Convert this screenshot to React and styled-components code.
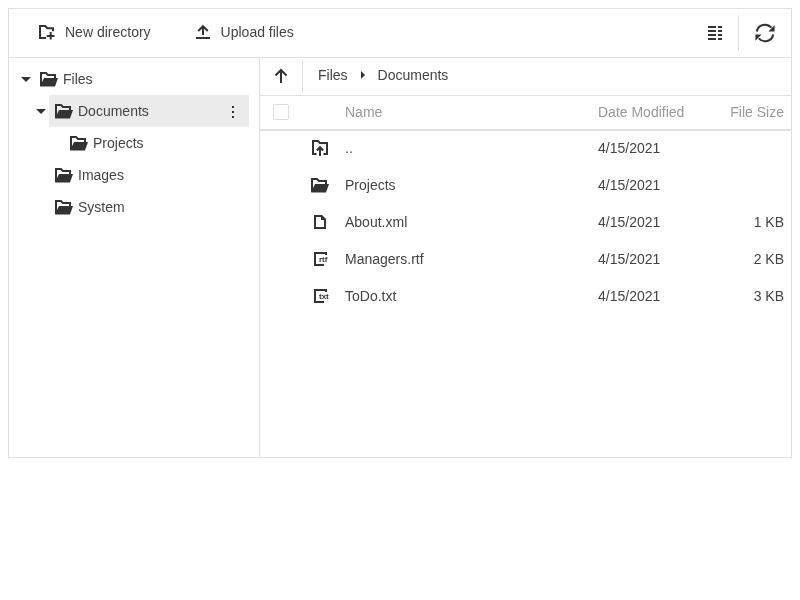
import React from 'react';
import styled, { createGlobalStyle } from 'styled-components';

const ink = '#333';

const GlobalStyle = createGlobalStyle`
  html, body { margin: 0; background: #fff; }
  body { padding: 8px; font-family: "Liberation Sans", Arial, sans-serif; font-size: 14px; color: #444; }
`;

const FolderOpen = () => (
  <svg width="18" height="16" viewBox="0 0 18 16" fill="none">
    <path d="M1 15V2h5l2 2h7v3" stroke={ink} strokeWidth="2" />
    <path d="M4 7h14l-3 8.5H0z" fill={ink} />
  </svg>
);

const NewDirIcon = () => (
  <svg width="16" height="16" viewBox="0 0 16 16" fill="none">
    <path d="M7 14H1V2h5.3l2 2.2H14v3" stroke={ink} strokeWidth="2" />
    <path d="M11.7 8v7.5M7.7 12H15.5" stroke={ink} strokeWidth="2" />
  </svg>
);

const UploadIcon = () => (
  <svg width="14" height="16" viewBox="0 0 14 16" fill="none">
    <path d="M7 11V2.5M2.2 7L7 2.2 11.8 7" stroke={ink} strokeWidth="2" />
    <path d="M0 14h14" stroke={ink} strokeWidth="2" />
  </svg>
);

const ListIcon = () => (
  <svg width="14" height="14" viewBox="0 0 14 14" fill={ink}>
    <path d="M0 0h8v2H0zM0 4h8v2H0zM0 8h8v2H0zM0 12h8v2H0zM10 0h4v2h-4zM10 4h4v2h-4zM10 8h4v2h-4zM10 12h4v2h-4z" />
  </svg>
);

const RefreshIcon = () => (
  <svg width="20" height="20" viewBox="0 0 20 20" fill="none">
    <path d="M1.8 8.5A8.3 8.3 0 0 1 16.2 4.6" stroke={ink} strokeWidth="2.1" />
    <path d="M18.2 11.5A8.3 8.3 0 0 1 3.8 15.4" stroke={ink} strokeWidth="2.1" />
    <path d="M19.6 2.2v6.2h-6.2zM0.4 17.8v-6.2h6.2z" fill={ink} />
  </svg>
);

const UpArrowIcon = () => (
  <svg width="14" height="15" viewBox="0 0 14 15" fill="none">
    <path d="M7 15V2M1.5 7.5L7 2l5.5 5.5" stroke={ink} strokeWidth="2" />
  </svg>
);

const ParentDirIcon = () => (
  <svg width="16" height="16" viewBox="0 0 16 16" fill="none">
    <path d="M4.5 14H1V1h5l1.8 2H15v11h-3.5" stroke={ink} strokeWidth="2" />
    <path d="M8 16V7.5M4.8 10.5L8 7.2l3.2 3.3" stroke={ink} strokeWidth="2" />
  </svg>
);

const FileIcon = () => (
  <svg width="12" height="14" viewBox="0 0 12 14" fill="none">
    <path d="M1 1h6l4 4v8H1z" stroke={ink} strokeWidth="2" />
    <path d="M7 0h1l4 4v1H7z" fill={ink} />
  </svg>
);

const TypedIcon = ({ label }) => (
  <TypedBox>
    <svg width="14" height="14" viewBox="0 0 14 14" fill="none">
      <path d="M12 3.5V1H1v12h9" stroke={ink} strokeWidth="2" />
    </svg>
    <TypedLabel>{label}</TypedLabel>
  </TypedBox>
);

const Caret = ({ right }) => <CaretMark $right={right} />;

const treeRows = [
  { name: 'Files', depth: 0, open: true },
  { name: 'Documents', depth: 1, open: true, selected: true },
  { name: 'Projects', depth: 2 },
  { name: 'Images', depth: 1 },
  { name: 'System', depth: 1 },
];

const files = [
  { name: '..', icon: <ParentDirIcon />, date: '4/15/2021', size: '' },
  { name: 'Projects', icon: <FolderOpen />, date: '4/15/2021', size: '' },
  { name: 'About.xml', icon: <FileIcon />, date: '4/15/2021', size: '1 KB' },
  { name: 'Managers.rtf', icon: <TypedIcon label="rtf" />, date: '4/15/2021', size: '2 KB' },
  { name: 'ToDo.txt', icon: <TypedIcon label="txt" />, date: '4/15/2021', size: '3 KB' },
];

const App = () => {
  return (
    <>
      <GlobalStyle />
      <Manager>
        <Toolbar>
          <ToolButton $left={30} $gap={10}>
            <NewDirIcon />
            New directory
          </ToolButton>
          <ToolButton $left={45} $gap={11}>
            <UploadIcon />
            Upload files
          </ToolButton>
          <ToolbarRight>
            <ListButton>
              <ListIcon />
            </ListButton>
            <ToolDivider />
            <IconButton>
              <RefreshIcon />
            </IconButton>
          </ToolbarRight>
        </Toolbar>
        <Body>
          <Sidebar>
            {treeRows.map((row) => (
              <TreeRow key={row.name} $depth={row.depth}>
                <CaretSlot>{row.open && <Caret />}</CaretSlot>
                <TreeLabel $selected={row.selected}>
                  <FolderOpen />
                  <span>{row.name}</span>
                  {row.selected && (
                    <Dots>
                      <i />
                      <i />
                      <i />
                    </Dots>
                  )}
                </TreeLabel>
              </TreeRow>
            ))}
          </Sidebar>
          <Main>
            <Breadcrumb>
              <UpButton>
                <UpArrowIcon />
              </UpButton>
              <Crumbs>
                <span>Files</span>
                <Caret right />
                <span>Documents</span>
              </Crumbs>
            </Breadcrumb>
            <HeaderRow>
              <CheckCell>
                <Checkbox />
              </CheckCell>
              <span />
              <span>Name</span>
              <span>Date Modified</span>
              <SizeCell>File Size</SizeCell>
            </HeaderRow>
            {files.map((file) => (
              <FileRow key={file.name}>
                <span />
                <IconCell>{file.icon}</IconCell>
                <span>{file.name}</span>
                <span>{file.date}</span>
                <SizeCell>{file.size}</SizeCell>
              </FileRow>
            ))}
          </Main>
        </Body>
      </Manager>
    </>
  );
};

const Manager = styled.div`
  width: 782px;
  height: 448px;
  border: 1px solid #e0e0e0;
  display: flex;
  flex-direction: column;
  will-change: transform;
`;

const Toolbar = styled.div`
  height: 48px;
  flex: none;
  display: flex;
  align-items: center;
  border-bottom: 1px solid #e0e0e0;
`;

const ToolButton = styled.div`
  display: flex;
  align-items: center;
  gap: ${(props) => props.$gap}px;
  margin-left: ${(props) => props.$left}px;
  padding-bottom: 2px;
`;

const ToolbarRight = styled.div`
  margin-left: auto;
  display: flex;
  align-items: center;
`;

const IconButton = styled.div`
  width: 52px;
  height: 36px;
  display: flex;
  align-items: center;
  justify-content: center;
`;

const ListButton = styled(IconButton)`
  padding-left: 6px;
  box-sizing: border-box;
`;

const ToolDivider = styled.div`
  width: 1px;
  height: 36px;
  background: #e0e0e0;
`;

const Body = styled.div`
  flex: 1;
  display: flex;
  min-height: 0;
`;

const Sidebar = styled.div`
  width: 250px;
  flex: none;
  border-right: 1px solid #e0e0e0;
  padding-top: 5px;
`;

const TreeRow = styled.div`
  height: 32px;
  display: flex;
  align-items: center;
  padding-left: ${(props) => 10 + props.$depth * 15}px;
  padding-right: 10px;
`;

const CaretSlot = styled.div`
  width: 13px;
  padding-left: 2px;
  flex: none;
  display: flex;
`;

const CaretMark = styled.i`
  display: block;
  width: 0;
  height: 0;
  ${(props) =>
    props.$right
      ? `border-top: 4px solid transparent; border-bottom: 4px solid transparent; border-left: 4px solid #333;`
      : `border-left: 5px solid transparent; border-right: 5px solid transparent; border-top: 5px solid #333;`}
`;

const TreeLabel = styled.div`
  flex: 1;
  height: 32px;
  display: flex;
  align-items: center;
  gap: 5px;
  padding-left: 6px;
  background: ${(props) => (props.$selected ? '#ebebeb' : 'transparent')};
`;

const Dots = styled.div`
  margin-left: auto;
  margin-right: 15px;
  margin-top: 2px;
  display: flex;
  flex-direction: column;
  gap: 3px;
  i {
    display: block;
    width: 2px;
    height: 2px;
    background: #333;
  }
`;

const Main = styled.div`
  flex: 1;
  min-width: 0;
`;

const Breadcrumb = styled.div`
  height: 37px;
  display: flex;
  align-items: center;
  border-bottom: 1px solid #e0e0e0;
`;

const UpButton = styled.div`
  width: 43px;
  height: 32px;
  display: flex;
  align-items: center;
  justify-content: center;
  padding-bottom: 3px;
  box-sizing: border-box;
  border-right: 1px solid #e0e0e0;
`;

const Crumbs = styled.div`
  display: flex;
  align-items: center;
  gap: 13px;
  margin-left: 15px;
  padding-bottom: 3px;
`;

const columns = '45px 40px 253px 1fr 90px';

const HeaderRow = styled.div`
  height: 35px;
  display: grid;
  grid-template-columns: ${columns};
  align-items: center;
  padding-right: 7px;
  padding-bottom: 2px;
  box-sizing: border-box;
  color: #999;
  border-bottom: 2px solid #e0e0e0;
`;

const FileRow = styled.div`
  height: 37px;
  display: grid;
  grid-template-columns: ${columns};
  align-items: center;
  padding-right: 7px;
  padding-bottom: 3px;
  box-sizing: border-box;
`;

const CheckCell = styled.div`
  padding-left: 13px;
  display: flex;
`;

const Checkbox = styled.div`
  width: 14px;
  height: 14px;
  border: 1px solid #ddd;
  border-radius: 2px;
`;

const IconCell = styled.div`
  display: flex;
  justify-content: center;
  padding-right: 10px;
`;

const SizeCell = styled.div`
  text-align: right;
`;

const TypedBox = styled.div`
  position: relative;
  width: 14px;
  height: 14px;
  margin-left: 2px;
`;

const TypedLabel = styled.span`
  position: absolute;
  left: 4px;
  top: 3px;
  padding: 0 0 0 1px;
  font-size: 8px;
  font-weight: bold;
  line-height: 9px;
  color: #333;
  background: #fff;
`;

export default App;
